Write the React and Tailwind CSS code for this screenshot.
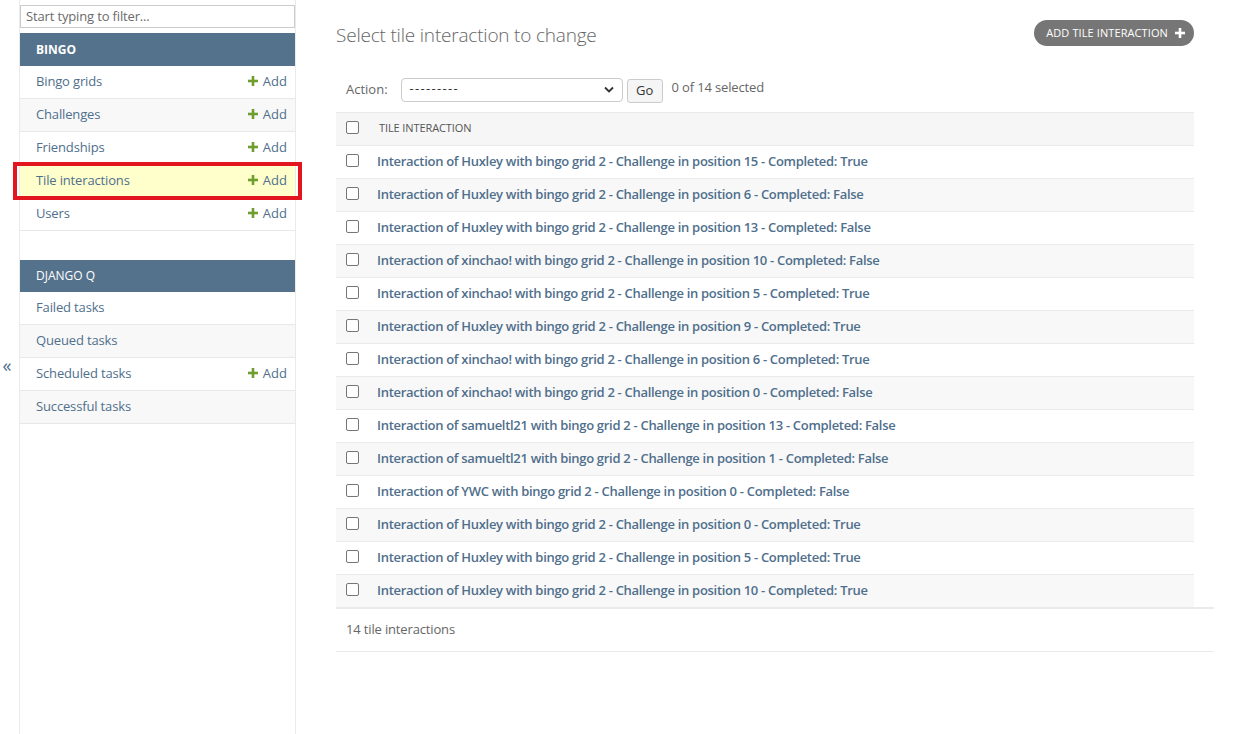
import React from "react";

const font = { fontFamily: '"Open Sans", "Noto Sans", sans-serif' };

const bingo = [
  { name: "Bingo grids", add: true },
  { name: "Challenges", add: true },
  { name: "Friendships", add: true },
  { name: "Tile interactions", add: true, current: true },
  { name: "Users", add: true },
];
const djq = [
  { name: "Failed tasks" },
  { name: "Queued tasks" },
  { name: "Scheduled tasks", add: true },
  { name: "Successful tasks" },
];

const rows = [
  "Interaction of Huxley with bingo grid 2 - Challenge in position 15 - Completed: True",
  "Interaction of Huxley with bingo grid 2 - Challenge in position 6 - Completed: False",
  "Interaction of Huxley with bingo grid 2 - Challenge in position 13 - Completed: False",
  "Interaction of xinchao! with bingo grid 2 - Challenge in position 10 - Completed: False",
  "Interaction of xinchao! with bingo grid 2 - Challenge in position 5 - Completed: True",
  "Interaction of Huxley with bingo grid 2 - Challenge in position 9 - Completed: True",
  "Interaction of xinchao! with bingo grid 2 - Challenge in position 6 - Completed: True",
  "Interaction of xinchao! with bingo grid 2 - Challenge in position 0 - Completed: False",
  "Interaction of samueltl21 with bingo grid 2 - Challenge in position 13 - Completed: False",
  "Interaction of samueltl21 with bingo grid 2 - Challenge in position 1 - Completed: False",
  "Interaction of YWC with bingo grid 2 - Challenge in position 0 - Completed: False",
  "Interaction of Huxley with bingo grid 2 - Challenge in position 0 - Completed: True",
  "Interaction of Huxley with bingo grid 2 - Challenge in position 5 - Completed: True",
  "Interaction of Huxley with bingo grid 2 - Challenge in position 10 - Completed: True",
];

function Plus({ className }) {
  return (
    <svg viewBox="0 0 10 10" className={className} fill="currentColor">
      <rect x="3.7" y="0" width="2.6" height="10" />
      <rect x="0" y="3.7" width="10" height="2.6" />
    </svg>
  );
}

function Box() {
  return <span className="block w-[13px] h-[13px] rounded-[2px] border border-[#767676] bg-white" />;
}

function NavRow({ item, idx }) {
  const bg = item.current ? "bg-[#ffffcc]" : idx % 2 === 1 ? "bg-[#f8f8f8]" : "bg-white";
  const row = (
    <div className={`h-[33px] flex items-center justify-between pl-4 pr-2 border-b border-[#e8e8e8] ${bg}`}>
      <span className="text-[13px] text-[#4f6f8c] tracking-[-0.15px]">{item.name}</span>
      {item.add && (
        <span className="flex items-center gap-[5px] text-[13px] text-[#4f6f8c]">
          <Plus className="w-[10px] h-[10px] text-[#6f9e2e] -mt-[3px]" />
          Add
        </span>
      )}
    </div>
  );
  if (item.current) {
    return (
      <div className="relative">
        {row}
        <div className="absolute left-[-7px] right-[-7px] top-[-3px] bottom-[-2px] border-[4px] border-[#e3161f] pointer-events-none" />
      </div>
    );
  }
  return row;
}

export default function App() {
  return (
    <div className="flex w-[1233px] h-[734px] bg-white overflow-hidden text-[#333]" style={font}>
      {/* toggle column */}
      <div className="w-[20px] shrink-0 border-r border-[#eaeaea] flex items-center justify-center">
        <span className="text-[18px] leading-none text-[#4f6f8c] -mt-[4px] -ml-[5px]">«</span>
      </div>
      {/* sidebar */}
      <div className="w-[276px] shrink-0 border-r border-[#eaeaea] pt-[5px]">
        <div className="h-[23px] border border-[#cccccc] flex items-center px-[5px] text-[13px] text-[#6b6b6b] tracking-[-0.15px]">
          Start typing to filter...
        </div>
        <div className="mt-[5px] w-[275px]">
          <div className="h-[33px] bg-[#54728c] flex items-center pl-4 text-[12px] font-bold text-white">BINGO</div>
          {bingo.map((it, i) => (
            <NavRow key={it.name} item={it} idx={i} />
          ))}
        </div>
        <div className="mt-[29px] w-[275px]">
          <div className="h-[32px] bg-[#54728c] flex items-center pl-4 text-[12px] text-white">DJANGO Q</div>
          {djq.map((it, i) => (
            <NavRow key={it.name} item={it} idx={i} />
          ))}
        </div>
      </div>
      {/* main */}
      <div className="flex-1 pl-[40px] pr-[19px]">
        <div className="flex items-center justify-between pr-[20px] pt-[19px]">
          <h1 className="text-[19px] font-light text-[#666] mt-[2px] tracking-[-0.2px]">Select tile interaction to change</h1>
          <div className="h-[26px] -mt-[3px] rounded-full bg-[#767676] flex items-center pl-[12px] pr-[9px] gap-[7px] text-[11px] text-white tracking-[0.1px]">
            ADD TILE INTERACTION
            <Plus className="w-[10px] h-[10px] text-white" />
          </div>
        </div>
        <div className="flex items-center mt-[28px] pl-[10px] h-[24px] mr-[20px]">
          <span className="text-[13px] text-[#666]">Action:</span>
          <div className="ml-[13px] w-[222px] h-[24px] border border-[#cccccc] rounded-[4px] flex items-center justify-between px-[8px]">
            <span className="text-[13px] text-[#333] -mt-[2px] tracking-[1.3px]">---------</span>
            <svg viewBox="0 0 10 6" className="w-[10px] h-[7px]" fill="none" stroke="#333" strokeWidth="1.8">
              <path d="M1 1l4 4 4-4" />
            </svg>
          </div>
          <div className="ml-[4px] w-[36px] h-[24px] mt-[2px] border border-[#cccccc] rounded-[3px] bg-[#f5f5f5] flex items-center justify-center text-[13px] text-[#333]">
            Go
          </div>
          <span className="ml-[9px] text-[13px] text-[#666] -mt-[4px] tracking-[-0.15px]">0 of 14 selected</span>
        </div>
        <div className="mt-[10px] mr-[20px]">
          <div className="h-[34px] bg-[#f6f6f6] border-t border-[#eaeaea] border-b border-[#eaeaea] flex items-center pl-[10px]">
            <span className="-mt-[3px]"><Box /></span>
            <span className="ml-[20px] text-[11px] text-[#555] uppercase tracking-[-0.1px]">Tile interaction</span>
          </div>
          {rows.map((r, i) => (
            <div
              key={i}
              className={`h-[33px] flex items-center pl-[10px] border-b border-[#eaeaea] ${i % 2 === 1 ? "bg-[#f8f8f8]" : "bg-white"}`}
            >
              <span className="-mt-[3px]"><Box /></span>
              <span className="ml-[18px] text-[13px] font-semibold text-[#4f6f8c] tracking-[-0.3px]">{r}</span>
            </div>
          ))}
        </div>
        <div className="border-t-2 border-[#eaeaea] -mt-[1px] h-[45px] flex items-center pl-[10px] border-b border-b-[#eaeaea]">
          <span className="text-[13px] text-[#666] tracking-[-0.15px]">14 tile interactions</span>
        </div>
      </div>
    </div>
  );
}
